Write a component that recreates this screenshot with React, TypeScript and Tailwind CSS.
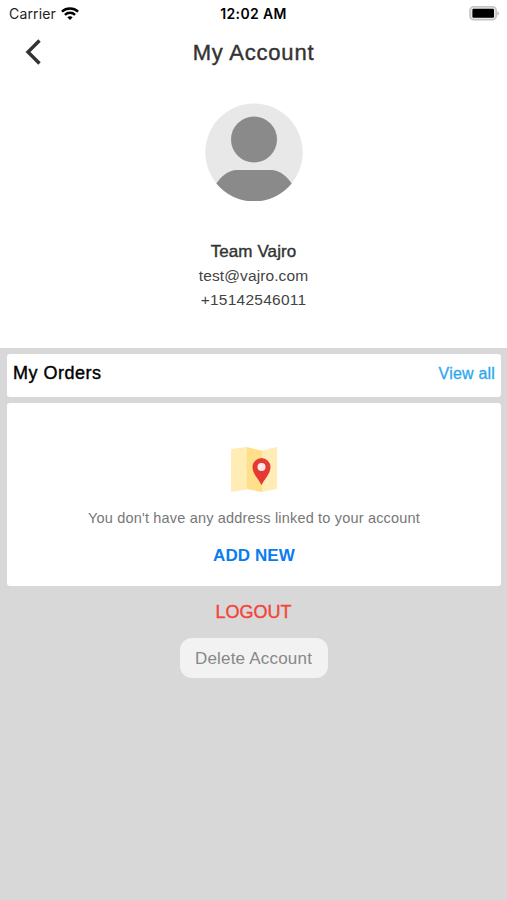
import React from 'react';

function WifiIcon() {
  return (
    <svg width="18" height="14" viewBox="0 0 18 14" fill="none" stroke="#000" strokeWidth="2.4">
      <path d="M0.9 4.6C5.4 0.4 12.6 0.4 17.1 4.6" />
      <path d="M3.9 7.8C6.8 5.1 11.2 5.1 14.1 7.8" />
      <path d="M9 13L6.3 10.3C7.8 9 10.2 9 11.7 10.3Z" fill="#000" stroke="none" />
    </svg>
  );
}

function BatteryIcon() {
  return (
    <svg width="31" height="16" viewBox="0 0 31 16">
      <rect x="1" y="0.8" width="26.2" height="13" rx="3.8" fill="#e6e6e6" stroke="#c4c4c4" strokeWidth="1.6" />
      <rect x="3.4" y="2.8" width="21.6" height="9" rx="1.2" fill="#000" />
      <path d="M28.4 5.2C30.4 6.1 30.4 8.7 28.4 9.6Z" fill="#b0b0b0" />
    </svg>
  );
}

function Avatar() {
  return (
    <svg width="98" height="98" viewBox="0 0 98 98">
      <circle cx="49" cy="49.3" r="48.7" fill="#e8e8e8" />
      <circle cx="49" cy="36.4" r="23" fill="#8a8a8a" />
      <path d="M11.3 80.500C16 73.500 23 67 32 67H66C75 67 82 73.500 86.700 80.500A48.700 48.700 0 0 1 11.300 80.500Z" fill="#8a8a8a" />
    </svg>
  );
}

function MapIcon() {
  return (
    <svg width="46" height="46" viewBox="0 0 46 46">
      <path d="M0 2L15.500 0V42.500L0 45Z" fill="#ffedb5" />
      <path d="M15.500 0L31 3.500V45L15.500 42Z" fill="#ffdf89" />
      <path d="M31 3.500L46 0V42L31 45Z" fill="#ffedb5" />
      <path d="M30.500 38C27 31.500 21.500 26.500 21.500 20A9 9 0 0 1 39.500 20C39.500 26.500 34 31.500 30.500 38Z" fill="#e53935" />
      <circle cx="30.500" cy="20" r="4" fill="#fbe9e7" />
    </svg>
  );
}

export default function App() {
  return (
    <div className="flex h-[900px] w-[507px] flex-col overflow-hidden bg-[#d8d8d8] font-['Liberation_Sans',sans-serif]">
      <div className="flex h-[348px] flex-col bg-white">
        <div className="grid h-7 grid-cols-3 items-center pl-[9px] pr-[7px] font-[Inter,sans-serif] text-sm text-black">
          <div className="flex items-center gap-[5px]">
            <span className="tracking-[0.15px] text-[#222]">Carrier</span>
            <WifiIcon />
          </div>
          <span className="pr-0.5 text-center font-semibold tracking-[0.35px]">12:02 AM</span>
          <div className="flex justify-end">
            <BatteryIcon />
          </div>
        </div>

        <header className="grid h-12 grid-cols-3 items-center">
          <button type="button" aria-label="Back" className="pl-[25px]">
            <svg width="17" height="26" viewBox="0 0 17 26" fill="none" stroke="#333" strokeWidth="3.4">
              <path d="M14.500 1.500L3 13L14.500 24.500" />
            </svg>
          </button>
          <h1 className="whitespace-nowrap text-center text-[22px] tracking-[0.8px] text-[#333] [-webkit-text-stroke:0.4px_#333]">My Account</h1>
        </header>

        <div className="flex flex-col items-center pt-[27px]">
          <Avatar />
          <div className="mt-[39px] text-center text-[15.500px] text-[#444]">
            <p className="text-[17px] leading-6 tracking-[0.1px] text-[#333] [-webkit-text-stroke:0.4px_#333]">Team Vajro</p>
            <p className="leading-[23px] tracking-[0.1px]">test@vajro.com</p>
            <p className="leading-[25px] tracking-[0.25px]">+15142546011</p>
          </div>
        </div>
      </div>

      <main className="flex flex-col gap-1.5 pl-[7px] pr-1.5 pt-1.5">
        <section className="flex h-[43px] items-center justify-between rounded-[3px] bg-white px-1.5 pb-1">
          <h2 className="text-[18px] tracking-[0.5px] text-black [-webkit-text-stroke:0.4px_#000]">My Orders</h2>
          <button type="button" className="text-[16px] tracking-[0.2px] text-[#2ca7ee] [-webkit-text-stroke:0.3px_#2ca7ee]">View all</button>
        </section>

        <section className="flex h-[183px] flex-col items-center rounded-[3px] bg-white pt-11">
          <MapIcon />
          <p className="mt-[15px] text-[14.500px] leading-5 tracking-[0.18px] text-[#777]">You don't have any address linked to your account</p>
          <button type="button" className="mt-4 text-[17px] font-bold leading-6 tracking-[0.1px] text-[#087cf0]">ADD NEW</button>
        </section>
      </main>

      <div className="flex flex-col items-center pt-3.5">
        <button type="button" className="text-[18px] leading-6 text-[#f4443a] [-webkit-text-stroke:0.4px_#f4443a]">LOGOUT</button>
        <button type="button" className="mt-3.5 h-10 w-[148px] rounded-xl bg-[#f2f2f2] pt-px text-[17px] tracking-[0.2px] text-[#888]">Delete Account</button>
      </div>
    </div>
  );
}
